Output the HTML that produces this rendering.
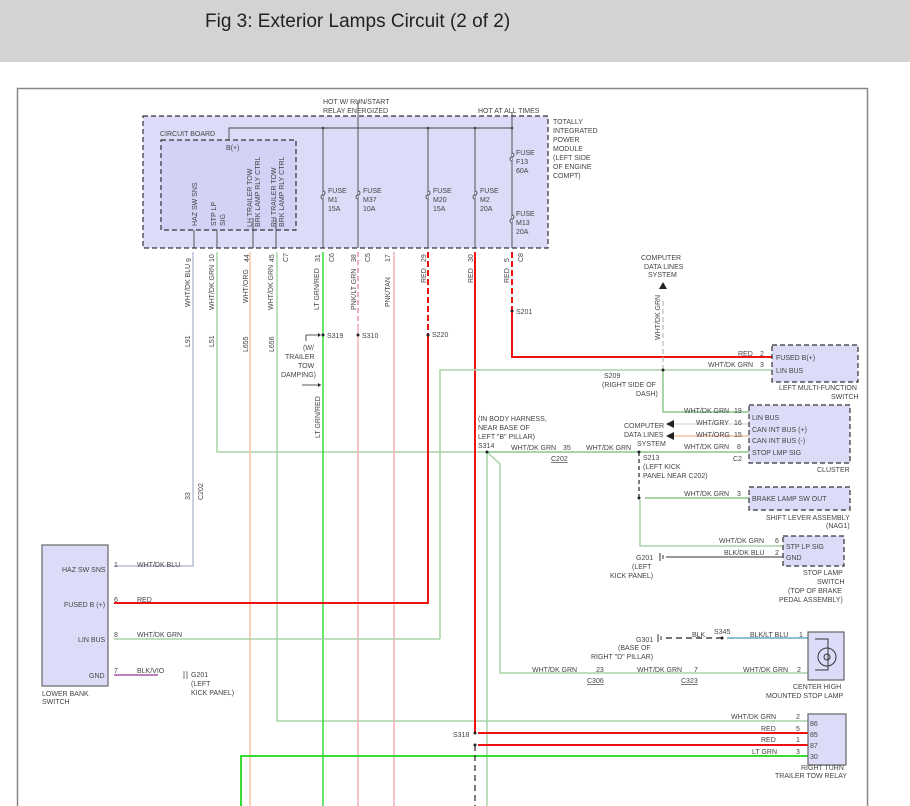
<!DOCTYPE html>
<html><head><meta charset="utf-8"><style>
body{margin:0;width:910px;height:806px;overflow:hidden;background:#fff;font-family:"Liberation Sans",sans-serif}
#hd{height:62px;background:#d3d3d3;position:relative}
#hd span{position:absolute;left:205px;top:11px;font-size:19px;color:#222}
svg{position:absolute;left:0;top:0}
text{font-family:"Liberation Sans",sans-serif;font-size:7px;fill:#444}
</style></head><body>
<div id="hd"><span>Fig 3: Exterior Lamps Circuit (2 of 2)</span></div>
<svg width="910" height="806" viewBox="0 0 910 806">
<!-- frame -->
<path d="M17.5 806V88.5H867.5V806" fill="none" stroke="#888" stroke-width="1.5"/>
<!-- TIPM -->
<rect x="143" y="116" width="405" height="132" fill="#dcdcf8" stroke="#333" stroke-dasharray="5,3" stroke-width="1.2"/>
<rect x="161" y="140" width="135" height="90" fill="#d2d2f6" stroke="#333" stroke-dasharray="5,3" stroke-width="1.2"/>
<text x="160" y="136">CIRCUIT BOARD</text>
<text x="226" y="150">B(+)</text>
<g stroke="#444" stroke-width="0.9" fill="none">
<path d="M229 140V128H512"/>
<path d="M358 100V248M512 112V248"/>
<path d="M323 128V248M428 128V248M475 128V248"/>
<path d="M194 230V248M217 230V248M253 218V248M276 218V248"/>
</g>
<g fill="#444"><circle cx="323" cy="128" r="1.3"/><circle cx="428" cy="128" r="1.3"/><circle cx="475" cy="128" r="1.3"/><circle cx="512" cy="128" r="1.3"/></g>
<!-- fuses -->
<g stroke="#444" fill="#dcdcf8" stroke-width="0.9">
<path d="M323 191a2 2 0 0 1 0 4a2 2 0 0 0 0 4M358 191a2 2 0 0 1 0 4a2 2 0 0 0 0 4M428 191a2 2 0 0 1 0 4a2 2 0 0 0 0 4M475 191a2 2 0 0 1 0 4a2 2 0 0 0 0 4M512 153a2 2 0 0 1 0 4a2 2 0 0 0 0 4M512 215a2 2 0 0 1 0 4a2 2 0 0 0 0 4"/>
</g>
<text x="328" y="193">FUSE</text><text x="328" y="202">M1</text><text x="328" y="211">15A</text>
<text x="363" y="193">FUSE</text><text x="363" y="202">M37</text><text x="363" y="211">10A</text>
<text x="433" y="193">FUSE</text><text x="433" y="202">M20</text><text x="433" y="211">15A</text>
<text x="480" y="193">FUSE</text><text x="480" y="202">M2</text><text x="480" y="211">20A</text>
<text x="516" y="155">FUSE</text><text x="516" y="164">F13</text><text x="516" y="173">60A</text>
<text x="516" y="216">FUSE</text><text x="516" y="225">M13</text><text x="516" y="234">20A</text>
<text x="323" y="104">HOT W/ RUN/START</text><text x="323" y="113">RELAY ENERGIZED</text>
<text x="478" y="113">HOT AT ALL TIMES</text>
<text x="553" y="124">TOTALLY</text><text x="553" y="133">INTEGRATED</text><text x="553" y="142">POWER</text><text x="553" y="151">MODULE</text><text x="553" y="160">(LEFT SIDE</text><text x="553" y="169">OF ENGINE</text><text x="553" y="178">COMPT)</text>
<g transform="rotate(-90)">
<text x="-226" y="197">HAZ SW SNS</text>
<text x="-226" y="216">STP LP</text><text x="-226" y="225">SIG</text>
<text x="-227" y="252">LH TRAILER TOW</text><text x="-227" y="260">BRK LAMP RLY CTRL</text>
<text x="-227" y="276">RH TRAILER TOW</text><text x="-227" y="284">BRK LAMP RLY CTRL</text>
</g>
<!-- wires -->
<g fill="none" stroke-width="1.5">
<path d="M193 252V566H114" stroke="#b8bfd8"/>
<path d="M217 252V452H487" stroke="#a8d3a8"/>
<path d="M250 252V806" stroke="#f5c0a0"/>
<path d="M277 252V721H808" stroke="#a8d3a8"/>
<path d="M323 252V806" stroke="#33dd33"/>
<path d="M358 252V325" stroke="#f08cb0" stroke-dasharray="5,3"/>
<path d="M358 325V806" stroke="#f0b0b8"/>
<path d="M394 252V806" stroke="#f0b0b8"/>
<path d="M428 252V335" stroke="#ee1111" stroke-width="2" stroke-dasharray="6,3"/>
<path d="M428 335V603H114" stroke="#ee1111" stroke-width="2"/>
<path d="M475 252V733" stroke="#ee1111" stroke-width="2"/>
<path d="M512 252V311" stroke="#ee1111" stroke-width="2" stroke-dasharray="6,3"/>
<path d="M512 311V357H772" stroke="#ee1111" stroke-width="2"/>
<path d="M440 639H114M440 639V370H772" stroke="#a8d3a8"/>
<path d="M663 370V412H808" stroke="#88c888"/>
<path d="M487 452H808" stroke="#88c888"/>
<path d="M487 452V806M487 452l13 12V673H808" stroke="#a8d3a8"/>
<path d="M645 498H808" stroke="#88c888"/>
<path d="M640 500V546H783" stroke="#a8d3a8"/>
<path d="M668 557H783" stroke="#777"/>
<path d="M670 424H808" stroke="#ddd"/>
<path d="M670 436H808" stroke="#f5c0a0"/>
<path d="M478 733H808M478 745H808" stroke="#ee1111" stroke-width="2"/>
<path d="M241 806V756H808" stroke="#33dd33" stroke-width="2"/>
<path d="M727 638H808" stroke="#66aacc"/>
<path d="M114 675H158" stroke="#aa55aa"/>
</g>
<g fill="none" stroke="#222" stroke-width="1.2">
<path d="M663 370V298" stroke="#bbb" stroke-dasharray="5,3"/>
<path d="M639 452V500" stroke-dasharray="4,3"/>
<path d="M475 745V806" stroke-dasharray="6,4"/>
<path d="M666 638H722" stroke-dasharray="6,4"/>
</g>
<path d="M663 282l-4 7h8z" fill="#222"/>
<path d="M666 424l8 -4v8zM666 436l8 -4v8z" fill="#222"/>
<g fill="#222"><circle cx="512" cy="311" r="1.5"/><circle cx="428" cy="335" r="1.5"/><circle cx="323" cy="335" r="1.5"/><circle cx="358" cy="335" r="1.5"/><circle cx="663" cy="370" r="1.5"/><circle cx="487" cy="452" r="1.5"/><circle cx="639" cy="452" r="1.5"/><circle cx="639" cy="498" r="1.5"/><circle cx="722" cy="638" r="1.5"/><circle cx="475" cy="733" r="1.5"/><circle cx="475" cy="745" r="1.5"/></g>
<!-- wire labels rotated -->
<g transform="rotate(-90)">
<text x="-262" y="191">9</text><text x="-262" y="214">10</text><text x="-262" y="249">44</text><text x="-262" y="274">45</text><text x="-262" y="288">C7</text>
<text x="-262" y="320">31</text><text x="-262" y="334">C6</text><text x="-262" y="356">38</text><text x="-262" y="370">C5</text><text x="-262" y="390">17</text><text x="-262" y="426">29</text><text x="-262" y="473">30</text><text x="-262" y="509">5</text><text x="-262" y="523">C8</text>
<text x="-307" y="190">WHT/DK BLU</text><text x="-310" y="214">WHT/DK GRN</text><text x="-303" y="248">WHT/ORG</text><text x="-310" y="273">WHT/DK GRN</text>
<text x="-310" y="319">LT GRN/RED</text><text x="-310" y="356">PNK/LT GRN</text><text x="-307" y="390">PNK/TAN</text><text x="-283" y="426">RED</text><text x="-283" y="473">RED</text><text x="-283" y="509">RED</text>
<text x="-347" y="190">L91</text><text x="-347" y="214">L51</text><text x="-352" y="248">L655</text><text x="-352" y="274">L656</text>
<text x="-438" y="320">LT GRN/RED</text>
<text x="-340" y="660">WHT/DK GRN</text>
<text x="-500" y="190">33</text><text x="-500" y="203">C202</text>
</g>
<text x="327" y="338">S319</text><text x="362" y="338">S310</text><text x="432" y="337">S220</text><text x="516" y="314">S201</text>
<text x="303" y="350">(W/</text><text x="285" y="359">TRAILER</text><text x="298" y="368">TOW</text><text x="281" y="377">DAMPING)</text>
<path d="M306 341v-6h14M302 385h19" stroke="#222" fill="none" stroke-width="0.8"/><path d="M321 335l-3-2v4zM321 385l-3-2v4z" fill="#222"/>
<text x="641" y="260">COMPUTER</text><text x="644" y="269">DATA LINES</text><text x="648" y="277">SYSTEM</text>
<text x="604" y="378">S209</text><text x="602" y="387">(RIGHT SIDE OF</text><text x="636" y="396">DASH)</text>
<text x="478" y="421">(IN BODY HARNESS,</text><text x="478" y="430">NEAR BASE OF</text><text x="478" y="439">LEFT "B" PILLAR)</text><text x="478" y="448">S314</text>
<text x="511" y="450">WHT/DK GRN</text><text x="563" y="450">35</text><text x="551" y="461" text-decoration="underline">C202</text>
<text x="586" y="450">WHT/DK GRN</text>
<text x="624" y="428">COMPUTER</text><text x="624" y="437">DATA LINES</text><text x="637" y="446">SYSTEM</text>
<text x="643" y="460">S213</text><text x="643" y="469">(LEFT KICK</text><text x="643" y="478">PANEL NEAR C202)</text>
<!-- right components -->
<g fill="#dcdcf8" stroke="#333" stroke-dasharray="5,3" stroke-width="1.2">
<rect x="772" y="345" width="86" height="37"/>
<rect x="749" y="405" width="101" height="58"/>
<rect x="749" y="487" width="101" height="23"/>
<rect x="783" y="536" width="61" height="30"/>
</g>
<g fill="#dcdcf8" stroke="#666" stroke-width="1.2">
<rect x="808" y="632" width="36" height="48"/>
<rect x="808" y="714" width="38" height="51"/>
<rect x="42" y="545" width="66" height="141"/>
</g>
<text x="776" y="360">FUSED B(+)</text><text x="776" y="373">LIN BUS</text>
<text x="738" y="356">RED</text><text x="760" y="356">2</text><text x="708" y="367">WHT/DK GRN</text><text x="760" y="367">3</text>
<text x="779" y="390">LEFT MULTI-FUNCTION</text><text x="831" y="399">SWITCH</text>
<text x="752" y="420">LIN BUS</text><text x="752" y="432">CAN INT BUS (+)</text><text x="752" y="443">CAN INT BUS (-)</text><text x="752" y="455">STOP LMP SIG</text>
<text x="684" y="413">WHT/DK GRN</text><text x="734" y="413">19</text><text x="696" y="425">WHT/GRY</text><text x="734" y="425">16</text><text x="696" y="437">WHT/ORG</text><text x="734" y="437">15</text><text x="684" y="449">WHT/DK GRN</text><text x="737" y="449">8</text><text x="733" y="461">C2</text>
<text x="817" y="472">CLUSTER</text>
<text x="752" y="501">BRAKE LAMP SW OUT</text><text x="684" y="496">WHT/DK GRN</text><text x="737" y="496">3</text>
<text x="766" y="520">SHIFT LEVER ASSEMBLY</text><text x="826" y="528">(NAG1)</text>
<text x="786" y="549">STP LP SIG</text><text x="786" y="560">GND</text>
<text x="719" y="543">WHT/DK GRN</text><text x="775" y="543">6</text><text x="724" y="555">BLK/DK BLU</text><text x="775" y="555">2</text>
<text x="803" y="575">STOP LAMP</text><text x="817" y="584">SWITCH</text><text x="788" y="593">(TOP OF BRAKE</text><text x="779" y="602">PEDAL ASSEMBLY)</text>
<text x="636" y="560">G201</text><text x="632" y="569">(LEFT</text><text x="610" y="578">KICK PANEL)</text>
<path d="M660 553v8M663 555v4M666 557h2" stroke="#333"/>
<text x="636" y="642">G301</text><text x="618" y="650">(BASE OF</text><text x="591" y="659">RIGHT "D" PILLAR)</text>
<path d="M658 634v8M661 636v4" stroke="#333"/>
<text x="692" y="637">BLK</text><text x="714" y="634">S345</text><text x="750" y="637">BLK/LT BLU</text><text x="799" y="637">1</text>
<text x="532" y="672">WHT/DK GRN</text><text x="596" y="672">23</text><text x="587" y="683" text-decoration="underline">C306</text>
<text x="637" y="672">WHT/DK GRN</text><text x="694" y="672">7</text><text x="681" y="683" text-decoration="underline">C323</text>
<text x="743" y="672">WHT/DK GRN</text><text x="797" y="672">2</text>
<path d="M815 639h13v31h-13" stroke="#333" fill="none"/><circle cx="827" cy="657" r="9" fill="none" stroke="#333"/><circle cx="827" cy="657" r="3" fill="none" stroke="#333"/>
<text x="793" y="689">CENTER HIGH</text><text x="766" y="698">MOUNTED STOP LAMP</text>
<text x="731" y="719">WHT/DK GRN</text><text x="796" y="719">2</text><text x="761" y="731">RED</text><text x="796" y="731">5</text><text x="761" y="742">RED</text><text x="796" y="742">1</text><text x="752" y="754">LT GRN</text><text x="796" y="754">3</text>
<text x="810" y="726">86</text><text x="810" y="737">85</text><text x="810" y="748">87</text><text x="810" y="759">30</text>
<text x="801" y="770">RIGHT TURN</text><text x="775" y="778">TRAILER TOW RELAY</text>
<text x="453" y="737">S318</text>
<!-- lower bank -->
<text x="62" y="572">HAZ SW SNS</text><text x="64" y="607">FUSED B (+)</text><text x="78" y="642">LIN BUS</text><text x="89" y="678">GND</text>
<text x="114" y="567">1</text><text x="137" y="567">WHT/DK BLU</text><text x="114" y="602">6</text><text x="137" y="602">RED</text><text x="114" y="637">8</text><text x="137" y="637">WHT/DK GRN</text><text x="114" y="673">7</text><text x="137" y="673">BLK/VIO</text>
<text x="42" y="696">LOWER BANK</text><text x="42" y="704">SWITCH</text>
<text x="191" y="677">G201</text><text x="191" y="686">(LEFT</text><text x="191" y="695">KICK PANEL)</text>
<path d="M184 671v8M187 671v8" stroke="#777"/>
</svg>
</body></html>
